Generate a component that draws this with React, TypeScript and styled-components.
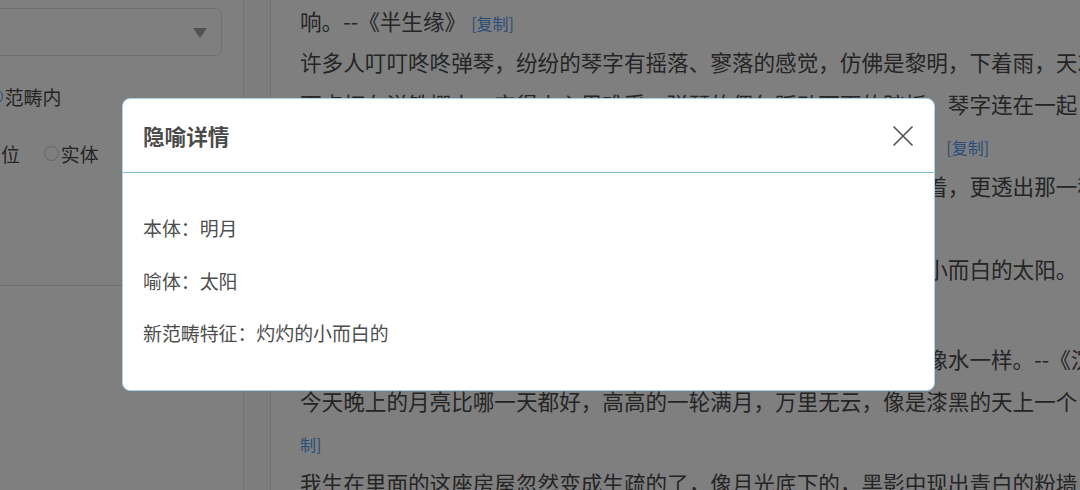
import React from "react";
import styled, { createGlobalStyle } from "styled-components";

const GlobalStyle = createGlobalStyle`
  html, body {
    margin: 0;
    padding: 0;
    background: #ffffff;
  }
  body {
    font-family: "Noto Sans CJK SC", "Noto Sans", sans-serif;
  }
`;

const Page = styled.div`
  position: relative;
  width: 1080px;
  height: 490px;
  overflow: hidden;
  display: flex;
  background: #fafafa;
`;

const Sidebar = styled.aside`
  width: 244px;
  flex-shrink: 0;
  box-sizing: border-box;
  padding-top: 8px;
  background: #ffffff;
  border-right: 1px solid #e6e6e6;
  overflow: hidden;
`;

const SelectBox = styled.div`
  margin-left: -100px;
  width: 322px;
  height: 48px;
  box-sizing: border-box;
  border: 1px solid #e2e2e2;
  border-radius: 6px;
  display: flex;
  align-items: center;
  justify-content: flex-end;
  padding-right: 14px;
`;

const Caret = styled.span`
  width: 0;
  height: 0;
  margin-top: 2px;
  border-left: 7px solid transparent;
  border-right: 7px solid transparent;
  border-top: 10px solid #a4a4a4;
`;

const RadioRow = styled.div<{ $shift: number; $top: number }>`
  display: flex;
  align-items: center;
  gap: 24px;
  height: 24px;
  margin-top: ${(p) => p.$top}px;
  margin-left: ${(p) => p.$shift}px;
  white-space: nowrap;
`;

const RadioOption = styled.label`
  display: flex;
  align-items: center;
  gap: 2px;
  font-size: 18.9px;
  color: #4a4a4a;
`;

const RadioCircle = styled.span<{ $checked?: boolean }>`
  position: relative;
  width: 15px;
  height: 15px;
  box-sizing: border-box;
  border-radius: 50%;
  border: 1px solid ${(p) => (p.$checked ? "#3d8ee6" : "#c9c9c9")};
  background: #ffffff;

  &::after {
    content: "";
    position: absolute;
    inset: 3px;
    border-radius: 50%;
    background: ${(p) => (p.$checked ? "#3d8ee6" : "transparent")};
  }
`;

const SideDivider = styled.hr`
  margin: 120px 0 0;
  border: none;
  border-top: 1px solid #dcdcdc;
`;

const Gutter = styled.div`
  width: 26px;
  flex-shrink: 0;
`;

const Content = styled.main`
  flex: 1;
  min-width: 0;
  box-sizing: border-box;
  padding-left: 29px;
  background: #ffffff;
  border-left: 1px solid #e6e6e6;
  overflow: hidden;
  font-size: 21.6px;
  color: #4a4a4a;
`;

const Line = styled.div<{ $space?: number }>`
  height: 41.3px;
  line-height: 41.3px;
  white-space: nowrap;
  margin-top: ${(p) => p.$space ?? 0}px;
`;

const CopyLink = styled.span<{ $lead?: boolean }>`
  margin-left: ${(p) => (p.$lead ? 0 : 5)}px;
  font-size: 16px;
  line-height: 1;
  color: #4f9cf0;
`;

const Overlay = styled.div`
  position: absolute;
  inset: 0;
  display: flex;
  align-items: flex-start;
  padding: 98px 0 0 122px;
  background: rgba(0, 0, 0, 0.5);
`;

const Dialog = styled.section`
  width: 813px;
  height: 293px;
  box-sizing: border-box;
  display: flex;
  flex-direction: column;
  background: #ffffff;
  border: 1px solid #a6d2ea;
  border-radius: 8px;
  overflow: hidden;
`;

const DialogHeader = styled.header`
  height: 74px;
  flex-shrink: 0;
  box-sizing: border-box;
  display: flex;
  align-items: center;
  justify-content: space-between;
  padding: 0 21px 0 20px;
  border-bottom: 1px solid #86bad7;
`;

const DialogTitle = styled.h2`
  margin: 0;
  font-size: 21.6px;
  font-weight: 700;
  color: #4b4b4b;
`;

const CloseButton = styled.button`
  display: flex;
  padding: 0;
  border: none;
  background: none;
  cursor: pointer;
`;

const DialogBody = styled.div`
  padding: 29px 20px 0;
`;

const DetailRow = styled.div`
  height: 52.5px;
  line-height: 52.5px;
  font-size: 18.9px;
  color: #4d4d4d;
  white-space: nowrap;
`;

const details = [
  { label: "本体", value: "明月" },
  { label: "喻体", value: "太阳" },
  { label: "新范畴特征", value: "灼灼的小而白的" },
];

const App: React.FC = () => {
  return (
    <>
      <GlobalStyle />
      <Page>
        <Sidebar>
          <SelectBox>
            <Caret />
          </SelectBox>
          <RadioRow $shift={-110} $top={28}>
            <RadioOption>
              <RadioCircle />
              跨范畴
            </RadioOption>
            <RadioOption>
              <RadioCircle $checked />
              范畴内
            </RadioOption>
          </RadioRow>
          <RadioRow $shift={-35} $top={33}>
            <RadioOption>
              <RadioCircle />
              方位
            </RadioOption>
            <RadioOption>
              <RadioCircle />
              实体
            </RadioOption>
            <RadioOption>
              <RadioCircle />
              事件
            </RadioOption>
          </RadioRow>
          <SideDivider />
        </Sidebar>
        <Gutter />
        <Content>
          <Line>
            响。--《半生缘》<CopyLink>[复制]</CopyLink>
          </Line>
          <Line>
            许多人叮叮咚咚弹琴，纷纷的琴字有摇落、寥落的感觉，仿佛是黎明，下着雨，天灰灰的
          </Line>
          <Line>
            下点打在洋铁棚上，空得人心里难受，弹琴的偶尔踩动下面的踏板，琴字连在一起
          </Line>
          <Line>
            成一片，一声一声都是孤单的，像冷雨落在水面上的。--《谈音乐》
            <CopyLink>[复制]</CopyLink>
          </Line>
          <Line>
            她们看那月亮，只觉得那月亮像一块冰冷的玉，那样清冷孤寂地照着，更透出那一种凄凉的意味，
          </Line>
          <Line>
            仿佛整个的世界都沉默了。--《沉香屑》<CopyLink>[复制]</CopyLink>
          </Line>
          <Line>
            月亮已经升上来了，淡淡的，白白的，高挂在天上，是一个灼灼的小而白的太阳。
          </Line>
          <Line>
            --《红玫瑰与白玫瑰》<CopyLink>[复制]</CopyLink>
          </Line>
          <Line $space={8}>
            那天晚上的月光特别的亮，照在地上，照在人身上，清清凉凉的，像水一样。--《沉香屑》
            <CopyLink>[复制]</CopyLink>
          </Line>
          <Line>
            今天晚上的月亮比哪一天都好，高高的一轮满月，万里无云，像是漆黑的天上一个白太阳。--《金锁记》
            <CopyLink>[复</CopyLink>
          </Line>
          <Line>
            <CopyLink $lead>制]</CopyLink>
          </Line>
          <Line>
            我生在里面的这座房屋忽然变成生疏的了，像月光底下的，黑影中现出青白的粉墙，片面的，癫狂的。
          </Line>
        </Content>
        <Overlay>
          <Dialog>
            <DialogHeader>
              <DialogTitle>隐喻详情</DialogTitle>
              <CloseButton aria-label="关闭">
                <svg width="20" height="20" viewBox="0 0 20 20">
                  <path
                    d="M1 1 L19 19 M19 1 L1 19"
                    stroke="#555555"
                    strokeWidth="1.7"
                    strokeLinecap="round"
                    fill="none"
                  />
                </svg>
              </CloseButton>
            </DialogHeader>
            <DialogBody>
              {details.map((item) => (
                <DetailRow key={item.label}>
                  {item.label}：{item.value}
                </DetailRow>
              ))}
            </DialogBody>
          </Dialog>
        </Overlay>
      </Page>
    </>
  );
};

export default App;
